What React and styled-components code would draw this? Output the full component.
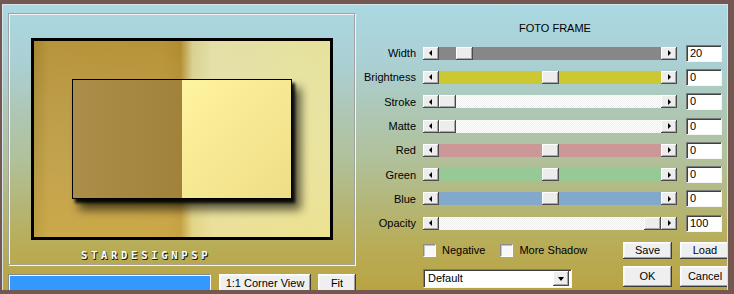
import React from "react";
import styled, { createGlobalStyle } from "styled-components";

const GlobalStyle = createGlobalStyle`
  html, body {
    margin: 0;
    padding: 0;
    background: #725851;
  }
  body {
    font-family: "Liberation Sans", Arial, sans-serif;
    font-size: 11px;
    color: #000;
  }
`;

const Window = styled.div`
  width: 734px;
  height: 294px;
  box-sizing: border-box;
  padding: 4px 6px 4px 2px;
  background: #725851;
`;

const Dialog = styled.div`
  height: 100%;
  box-sizing: border-box;
  display: flex;
  align-items: flex-start;
  padding: 8px 0 0 5px;
  border-left: 1px solid #d4e4e8;
  border-top: 1px solid #d4e4e8;
  border-right: 1px solid #e2e0c6;
  overflow: hidden;
  background: linear-gradient(
    to bottom,
    #abd8e2 0%,
    #aad0d4 20%,
    #aec6b0 40%,
    #b1c099 55%,
    #b4b677 70%,
    #b8ac56 85%,
    #b9a444 100%
  );
`;

const LeftCol = styled.div`
  width: 348px;
  flex-shrink: 0;
`;

const Preview = styled.div`
  box-sizing: border-box;
  width: 347px;
  height: 252px;
  border: 1px solid #a2a2a2;
  box-shadow: 1px 1px 0 #f4f4f4, inset 1px 1px 0 #f4f4f4;
  padding: 24px 0 0 22px;
`;

const Signature = styled.div`
  margin: 8px 0 0 50px;
  font-family: "DejaVu Sans Mono", monospace;
  font-weight: bold;
  font-size: 10.5px;
  line-height: 10px;
  letter-spacing: 3.7px;
  color: #fff;
  text-shadow: 1px 1px 0 #1a1a1a, 0 1px 0 #333;
`;

const BottomBar = styled.div`
  display: flex;
  align-items: flex-start;
  margin-top: 9px;
`;

const Progress = styled.div`
  box-sizing: border-box;
  width: 203px;
  height: 17px;
  border: 1px solid;
  border-color: #8a8a8a #f6f6f6 #f6f6f6 #8a8a8a;
  box-shadow: inset 1px 1px 0 #f6f6f6;
  background: #3399ff;
`;

const PushButton = styled.div`
  box-sizing: border-box;
  width: ${(p) => p.$w}px;
  height: ${(p) => p.$h}px;
  margin-left: ${(p) => p.$ml || 0}px;
  display: flex;
  align-items: center;
  justify-content: center;
  background: #efefef;
  box-shadow: inset -1px -1px 0 #3c3c3c, inset 1px 1px 0 #ffffff,
    inset -2px -2px 0 #a0a0a0, inset 2px 2px 0 #f8f8f8;
  font-size: 11px;
  white-space: nowrap;
`;

const RightCol = styled.div`
  width: 362px;
  margin-left: 4px;
  padding-top: 9px;
`;

const Title = styled.div`
  width: 264px;
  margin-left: 63px;
  text-align: center;
  line-height: 13px;
  font-size: 11px;
`;

const Rows = styled.div`
  margin-top: 6px;
`;

const Row = styled.div`
  display: flex;
  align-items: center;
  height: 24.3px;
`;

const Label = styled.div`
  width: 56px;
  margin-right: 7px;
  text-align: right;
  white-space: nowrap;
`;

const Scroll = styled.div`
  display: flex;
  width: 254px;
  height: 13px;
`;

const ArrowBtn = styled.div`
  box-sizing: border-box;
  width: 16px;
  height: 13px;
  flex-shrink: 0;
  display: flex;
  align-items: center;
  justify-content: center;
  background: #ededed;
  box-shadow: inset -1px -1px 0 #4a4a4a, inset 1px 1px 0 #ffffff,
    inset -2px -2px 0 #a8a8a8;
`;

const Tri = styled.span`
  width: 0;
  height: 0;
  border-top: 3px solid transparent;
  border-bottom: 3px solid transparent;
  ${(p) =>
    p.$dir === "left"
      ? "border-right: 3px solid #000; margin-right: 2px;"
      : "border-left: 3px solid #000; margin-left: 1px;"}
`;

const Track = styled.div`
  flex: 1;
  display: flex;
  background: ${(p) =>
    p.$bg === "dither"
      ? "repeating-conic-gradient(#ffffff 0 25%, #eeeeee 0 50%) 0 0 / 2px 2px"
      : p.$bg};
`;

const Spacer = styled.div`
  flex: ${(p) => p.$grow};
`;

const Thumb = styled.div`
  box-sizing: border-box;
  width: 17px;
  height: 13px;
  flex-shrink: 0;
  background: #ededed;
  box-shadow: inset -1px -1px 0 #4a4a4a, inset 1px 1px 0 #ffffff,
    inset -2px -2px 0 #a8a8a8;
`;

const ValueBox = styled.div`
  box-sizing: border-box;
  width: 36px;
  height: 17px;
  margin-left: 9px;
  padding: 1px 0 0 3px;
  background: #fff;
  border: 1px solid;
  border-color: #7a7a7a #f6f6f6 #f6f6f6 #7a7a7a;
  box-shadow: inset 1px 1px 0 #404040;
  font-size: 11px;
  line-height: 13px;
`;

const Actions = styled.div`
  display: grid;
  grid-template-columns: 192px 49px 50px;
  grid-template-rows: 17px 21px;
  column-gap: 8px;
  row-gap: 7px;
  margin: 6.6px 0 0 63px;
`;

const Checks = styled.div`
  display: flex;
  align-items: center;
  gap: 15px;
`;

const CheckItem = styled.div`
  display: flex;
  align-items: center;
  gap: 6px;
  white-space: nowrap;
`;

const Box = styled.div`
  box-sizing: border-box;
  width: 13px;
  height: 13px;
  background: #f8f8f8;
  border: 1px solid;
  border-color: #8c8c8c #ffffff #ffffff #8c8c8c;
  box-shadow: inset 1px 1px 0 #c4c4c4;
`;

const Select = styled.div`
  box-sizing: border-box;
  width: 149px;
  height: 19px;
  margin-top: 3px;
  display: flex;
  align-items: center;
  justify-content: space-between;
  padding: 2px 2px 2px 4px;
  background: #fff;
  border: 1px solid;
  border-color: #7a7a7a #f6f6f6 #f6f6f6 #7a7a7a;
  box-shadow: inset 1px 1px 0 #404040;
`;

const SelectBtn = styled.div`
  box-sizing: border-box;
  width: 16px;
  height: 15px;
  display: flex;
  align-items: center;
  justify-content: center;
  background: #ededed;
  box-shadow: inset -1px -1px 0 #4a4a4a, inset 1px 1px 0 #ffffff,
    inset -2px -2px 0 #a8a8a8;
`;

const DownTri = styled.span`
  width: 0;
  height: 0;
  border-left: 3.5px solid transparent;
  border-right: 3.5px solid transparent;
  border-top: 4px solid #000;
  margin-top: 1px;
`;

const sliders = [
  { label: "Width", bg: "#878787", pos: 0.083, value: "20" },
  { label: "Brightness", bg: "#cbc832", pos: 0.5, value: "0" },
  { label: "Stroke", bg: "dither", pos: 0, value: "0" },
  { label: "Matte", bg: "dither", pos: 0, value: "0" },
  { label: "Red", bg: "#cc9797", pos: 0.5, value: "0" },
  { label: "Green", bg: "#97c996", pos: 0.5, value: "0" },
  { label: "Blue", bg: "#82a9cc", pos: 0.5, value: "0" },
  { label: "Opacity", bg: "dither", pos: 1, value: "100" },
];

function PreviewArt() {
  return (
    <svg width="302" height="202" viewBox="0 0 302 202">
      <defs>
        <linearGradient id="outerH" x1="0" x2="1" y1="0" y2="0">
          <stop offset="0" stopColor="#a2822a" />
          <stop offset="0.06" stopColor="#b6943a" />
          <stop offset="0.44" stopColor="#b79236" />
          <stop offset="0.495" stopColor="#b18b2e" />
          <stop offset="0.535" stopColor="#d8d08e" />
          <stop offset="0.6" stopColor="#e3dfa6" />
          <stop offset="1" stopColor="#e6e29a" />
        </linearGradient>
        <linearGradient id="outerV" x1="0" x2="0" y1="0" y2="1">
          <stop offset="0" stopColor="#ffffff" stopOpacity="0" />
          <stop offset="1" stopColor="#ffe070" stopOpacity="0.28" />
        </linearGradient>
        <linearGradient id="innerL" x1="0" x2="1" y1="0" y2="0">
          <stop offset="0" stopColor="#ac8e4a" />
          <stop offset="1" stopColor="#a2823a" />
        </linearGradient>
        <linearGradient id="innerR" x1="0" x2="1" y1="0" y2="1">
          <stop offset="0" stopColor="#fff4a0" />
          <stop offset="1" stopColor="#eedd86" />
        </linearGradient>
        <filter id="soft" x="-30%" y="-30%" width="160%" height="160%">
          <feGaussianBlur stdDeviation="5" />
        </filter>
        <filter id="hard" x="-20%" y="-20%" width="140%" height="140%">
          <feGaussianBlur stdDeviation="1.5" />
        </filter>
      </defs>
      <rect x="0" y="0" width="302" height="202" fill="url(#outerH)" />
      <rect x="0" y="0" width="302" height="202" fill="url(#outerV)" />
      <rect x="48" y="50" width="222" height="122" fill="#000" opacity="0.6" filter="url(#soft)" />
      <rect x="44" y="45" width="220" height="120" fill="#000" opacity="0.9" filter="url(#hard)" />
      <rect x="41" y="41" width="110" height="120" fill="url(#innerL)" />
      <rect x="151" y="41" width="110" height="120" fill="url(#innerR)" />
      <rect x="41.5" y="41.5" width="219" height="119" fill="none" stroke="#000" strokeWidth="1" />
      <rect x="1.5" y="1.5" width="299" height="199" fill="none" stroke="#000" strokeWidth="3" />
    </svg>
  );
}

function Slider({ label, bg, pos, value }) {
  return (
    <Row>
      <Label>{label}</Label>
      <Scroll>
        <ArrowBtn>
          <Tri $dir="left" />
        </ArrowBtn>
        <Track $bg={bg}>
          <Spacer $grow={pos} />
          <Thumb />
          <Spacer $grow={1 - pos} />
        </Track>
        <ArrowBtn>
          <Tri $dir="right" />
        </ArrowBtn>
      </Scroll>
      <ValueBox>{value}</ValueBox>
    </Row>
  );
}

export default function App() {
  return (
    <Window>
      <GlobalStyle />
      <Dialog>
        <LeftCol>
          <Preview>
            <PreviewArt />
            <Signature>STARDESIGNPSP</Signature>
          </Preview>
          <BottomBar>
            <Progress />
            <PushButton $w={92} $h={18} $ml={8}>
              1:1 Corner View
            </PushButton>
            <PushButton $w={38} $h={18} $ml={7}>
              Fit
            </PushButton>
          </BottomBar>
        </LeftCol>
        <RightCol>
          <Title>FOTO FRAME</Title>
          <Rows>
            {sliders.map((s) => (
              <Slider key={s.label} {...s} />
            ))}
          </Rows>
          <Actions>
            <Checks>
              <CheckItem>
                <Box />
                Negative
              </CheckItem>
              <CheckItem>
                <Box />
                More Shadow
              </CheckItem>
            </Checks>
            <PushButton $w={49} $h={17}>Save</PushButton>
            <PushButton $w={50} $h={17}>Load</PushButton>
            <Select>
              Default
              <SelectBtn>
                <DownTri />
              </SelectBtn>
            </Select>
            <PushButton $w={49} $h={21}>OK</PushButton>
            <PushButton $w={50} $h={21}>Cancel</PushButton>
          </Actions>
        </RightCol>
      </Dialog>
    </Window>
  );
}
